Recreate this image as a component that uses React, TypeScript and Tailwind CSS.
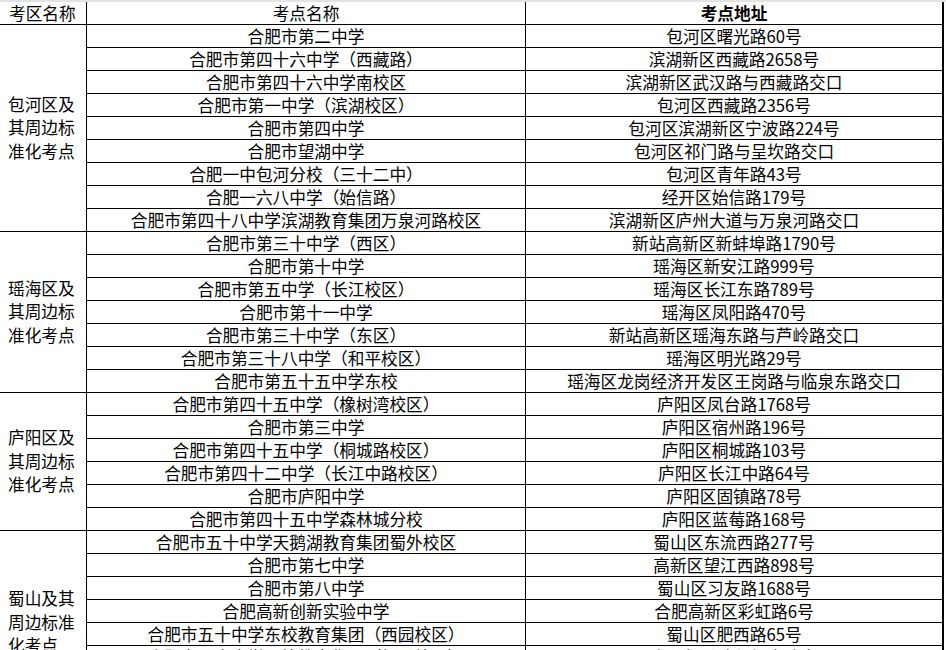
import React from 'react';

type Region = {
  label: string[];
  rows: [string, string][];
};

const regions: Region[] = [
  {
    label: ['包河区及', '其周边标', '准化考点'],
    rows: [
      ['合肥市第二中学', '包河区曙光路60号'],
      ['合肥市第四十六中学（西藏路）', '滨湖新区西藏路2658号'],
      ['合肥市第四十六中学南校区', '滨湖新区武汉路与西藏路交口'],
      ['合肥市第一中学（滨湖校区）', '包河区西藏路2356号'],
      ['合肥市第四中学', '包河区滨湖新区宁波路224号'],
      ['合肥市望湖中学', '包河区祁门路与呈坎路交口'],
      ['合肥一中包河分校（三十二中）', '包河区青年路43号'],
      ['合肥一六八中学（始信路）', '经开区始信路179号'],
      ['合肥市第四十八中学滨湖教育集团万泉河路校区', '滨湖新区庐州大道与万泉河路交口'],
    ],
  },
  {
    label: ['瑶海区及', '其周边标', '准化考点'],
    rows: [
      ['合肥市第三十中学（西区）', '新站高新区新蚌埠路1790号'],
      ['合肥市第十中学', '瑶海区新安江路999号'],
      ['合肥市第五中学（长江校区）', '瑶海区长江东路789号'],
      ['合肥市第十一中学', '瑶海区凤阳路470号'],
      ['合肥市第三十中学（东区）', '新站高新区瑶海东路与芦岭路交口'],
      ['合肥市第三十八中学（和平校区）', '瑶海区明光路29号'],
      ['合肥市第五十五中学东校', '瑶海区龙岗经济开发区王岗路与临泉东路交口'],
    ],
  },
  {
    label: ['庐阳区及', '其周边标', '准化考点'],
    rows: [
      ['合肥市第四十五中学（橡树湾校区）', '庐阳区凤台路1768号'],
      ['合肥市第三中学', '庐阳区宿州路196号'],
      ['合肥市第四十五中学（桐城路校区）', '庐阳区桐城路103号'],
      ['合肥市第四十二中学（长江中路校区）', '庐阳区长江中路64号'],
      ['合肥市庐阳中学', '庐阳区固镇路78号'],
      ['合肥市第四十五中学森林城分校', '庐阳区蓝莓路168号'],
    ],
  },
  {
    label: ['蜀山及其', '周边标准', '化考点'],
    rows: [
      ['合肥市五十中学天鹅湖教育集团蜀外校区', '蜀山区东流西路277号'],
      ['合肥市第七中学', '高新区望江西路898号'],
      ['合肥市第八中学', '蜀山区习友路1688号'],
      ['合肥高新创新实验中学', '合肥高新区彩虹路6号'],
      ['合肥市五十中学东校教育集团（西园校区）', '蜀山区肥西路65号'],
      ['合肥市五十中学西校教育集团（望岳校区）', '蜀山区望岳路与怀宁路交口'],
      ['合肥市琥珀中学', '蜀山区琥珀山庄南村'],
      ['合肥市第四十二中学（湖畔路校区）', '蜀山区湖畔路88号'],
    ],
  },
];

const cell = 'flex items-center justify-center whitespace-nowrap border-b border-black';

const App: React.FC = () => {
  return (
    <div
      className="w-[946px] bg-white text-black text-[16.7px] leading-[23px]"
      style={{ fontFamily: '"Noto Sans CJK SC", "Noto Sans", sans-serif' }}
    >
      <div className="h-[2px] bg-[#e3e3e3]" />
      <div className="grid grid-cols-[87px_439px_418px] auto-rows-[23px]">
        {/* header */}
        <div className="flex items-center border-b border-r border-black pl-[9px] whitespace-nowrap">考区名称</div>
        <div className={`${cell} border-r`}>考点名称</div>
        <div className={`${cell} border-r-2 font-bold`}>考点地址</div>

        {regions.map((region) => (
          <React.Fragment key={region.label.join('')}>
            <div
              className="flex flex-col justify-center border-b border-r border-black pl-2 leading-[23.5px]"
              style={{ gridRow: `span ${region.rows.length} / span ${region.rows.length}` }}
            >
              {region.label.map((line) => (
                <span key={line}>{line}</span>
              ))}
            </div>
            {region.rows.map(([school, address], i) => (
              <React.Fragment key={school + i}>
                <div className={`${cell} col-start-2 border-r`}>{school}</div>
                <div className={`${cell} border-r-2`}>{address}</div>
              </React.Fragment>
            ))}
          </React.Fragment>
        ))}
      </div>
    </div>
  );
};

export default App;
